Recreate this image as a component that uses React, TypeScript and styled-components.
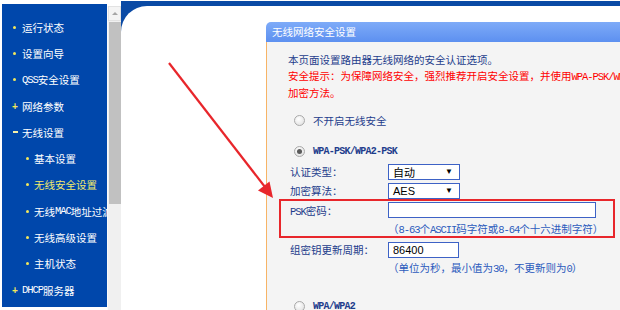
import React from "react";
import styled, { createGlobalStyle } from "styled-components";

const colors = {
    sidebar: "#0047ab",
    frame: "#0a4aa5",
    yellow: "#f3e85a",
    navy: "#1e3d8c",
    hint: "#2c5bbd",
    red: "#ff0000",
    mark: "#e8262b",
    orange: "#f7b466",
    field: "#3d62c6",
};

const GlobalStyle = createGlobalStyle`
    html, body {
        margin: 0;
        padding: 0;
        background: #fff;
        overflow: hidden;
    }
    body {
        font-family: "Noto Sans CJK SC", "Liberation Sans", sans-serif;
        font-size: 10.5px;
    }
`;

const menu = [
    { label: "运行状态", level: 0, mark: "dot" },
    { label: "设置向导", level: 0, mark: "dot" },
    { label: ["QSS", "安全设置"], level: 0, mark: "dot" },
    { label: "网络参数", level: 0, mark: "plus" },
    { label: "无线设置", level: 0, mark: "minus" },
    { label: "基本设置", level: 1, mark: "dot" },
    { label: "无线安全设置", level: 1, mark: "dot", active: true },
    { label: ["无线", "MAC", "地址过滤"], level: 1, mark: "dot" },
    { label: "无线高级设置", level: 1, mark: "dot" },
    { label: "主机状态", level: 1, mark: "dot" },
    { label: ["", "DHCP", "服务器"], level: 0, mark: "plus" },
];

const renderLabel = (label: string | string[]) => {
    if (typeof label === "string") return label;
    if (label.length === 2) return <><Half>{label[0]}</Half>{label[1]}</>;
    return <>{label[0]}<Half>{label[1]}</Half>{label[2]}</>;
};

const App: React.FC = () => (
    <>
        <GlobalStyle />
        <Page>
            <Sidebar>
                {menu.map((item, i) => (
                    <MenuItem key={i} $level={item.level} $active={item.active}>
                        <Marker $level={item.level}>
                            {item.mark === "dot" && <Dot />}
                            {item.mark === "plus" && <Sign>+</Sign>}
                            {item.mark === "minus" && <Minus />}
                        </Marker>
                        {renderLabel(item.label)}
                    </MenuItem>
                ))}
            </Sidebar>

            <Scrollbar>
                <ScrollButton>
                    <UpArrow />
                </ScrollButton>
                <ScrollThumb />
            </Scrollbar>

            <Main>
                <Content>
                    <Panel>
                        <PanelHeader>无线网络安全设置</PanelHeader>
                        <PanelBody>
                            <Intro>本页面设置路由器无线网络的安全认证选项。</Intro>
                            <Warning>
                                安全提示：为保障网络安全，强烈推荐开启安全设置，并使用
                                <Half>WPA-PSK/WPA2-PSK</Half> AES
                                <br />
                                加密方法。
                            </Warning>

                            <RadioRow $gap={9}>
                                <Radio />
                                <span>不开启无线安全</span>
                            </RadioRow>

                            <RadioRow $gap={11}>
                                <Radio $checked />
                                <Mono>WPA-PSK/WPA2-PSK</Mono>
                            </RadioRow>

                            <FormRow $gap={1}>
                                <Label>认证类型：</Label>
                                <Select>
                                    <span>自动</span>
                                    <Caret>▼</Caret>
                                </Select>
                            </FormRow>
                            <FormRow>
                                <Label>加密算法：</Label>
                                <Select>
                                    <span>AES</span>
                                    <Caret>▼</Caret>
                                </Select>
                            </FormRow>

                            <Highlight>
                                <FormRow $height={20}>
                                    <Label>
                                        <Half>PSK</Half>密码：
                                    </Label>
                                    <TextField $width={208} readOnly value="" />
                                </FormRow>
                                <Hint $gap={1}>
                                    （<Half>8-63</Half>个<Half>ASCII</Half>码字符或<Half>8-64</Half>个十六进制字符）
                                </Hint>
                            </Highlight>

                            <FormRow $gap={2}>
                                <Label>组密钥更新周期：</Label>
                                <TextField $width={71} readOnly value="86400" />
                            </FormRow>
                            <Hint $gap={1}>
                                （单位为秒，最小值为<Half>30</Half>，不更新则为<Half>0</Half>）
                            </Hint>

                            <RadioRow $gap={19}>
                                <Radio />
                                <Mono>WPA/WPA2</Mono>
                            </RadioRow>
                        </PanelBody>
                    </Panel>
                </Content>
            </Main>

            <Annotation width="620" height="310" viewBox="0 0 620 310">
                <line x1="169" y1="63" x2="265" y2="187" stroke={colors.mark} strokeWidth="2.2" />
                <polygon points="273,198 258,190.5 269.5,181.5" fill={colors.mark} />
            </Annotation>
        </Page>
    </>
);

const Page = styled.div`
    position: relative;
    display: flex;
    width: 620px;
    height: 310px;
    overflow: hidden;
`;

const Sidebar = styled.nav`
    flex: 0 0 105px;
    margin: 4px 0 3px 2px;
    padding-top: 10px;
    box-sizing: border-box;
    background: ${colors.sidebar};
    overflow: hidden;
`;

const MenuItem = styled.div<{ $level: number; $active?: boolean }>`
    display: flex;
    align-items: center;
    height: 26.3px;
    padding-left: ${(p) => (p.$level ? 24 : 11)}px;
    white-space: nowrap;
    color: ${(p) => (p.$active ? "#f2ea6c" : "#fff")};
`;

const Marker = styled.span<{ $level: number }>`
    display: flex;
    align-items: center;
    flex: 0 0 ${(p) => (p.$level ? 8 : 9)}px;
`;

const Dot = styled.span`
    width: 3px;
    height: 3px;
    border-radius: 50%;
    background: ${colors.yellow};
`;

const Sign = styled.span`
    font-family: "Liberation Sans", sans-serif;
    font-size: 10px;
    font-weight: bold;
    color: ${colors.yellow};
    margin-left: -1px;
`;

const Minus = styled.span`
    width: 5px;
    height: 2px;
    background: #f4efa8;
`;

const Half = styled.span`
    font-family: "Liberation Mono", monospace;
    letter-spacing: -1.05px;
`;

const Scrollbar = styled.div`
    flex: 0 0 14px;
    margin-top: 6px;
    display: flex;
    flex-direction: column;
    background: #f0f0f0;
    border-left: 1px solid #fafafa;
    box-sizing: border-box;
`;

const ScrollButton = styled.div`
    height: 15px;
    display: flex;
    align-items: center;
    justify-content: center;
    border: 1px solid #e2e2e2;
    background: #f4f4f4;
    box-sizing: border-box;
`;

const UpArrow = styled.span`
    width: 0;
    height: 0;
    border-left: 3px solid transparent;
    border-right: 3px solid transparent;
    border-bottom: 3px solid #a6a6a6;
`;

const ScrollThumb = styled.div`
    height: 182px;
    margin: 1px 0 0 1px;
    background: #c1c1c1;
`;

const Main = styled.main`
    flex: 1;
    min-width: 0;
    margin-top: 1px;
    display: flex;
    flex-direction: column;
    background: ${colors.frame};
`;

const Content = styled.div`
    flex: 1;
    display: flex;
    flex-direction: column;
    margin-top: 5px;
    padding: 16px 0 0 145px;
    background: #fff;
    border-top-left-radius: 26px;
    overflow: hidden;
`;

const Panel = styled.section`
    flex: 1;
    width: 420px;
    display: flex;
    flex-direction: column;
`;

const PanelHeader = styled.div`
    height: 20px;
    line-height: 20px;
    padding-left: 6px;
    color: #fff;
    background: linear-gradient(#7eabf8, #5d90f0);
    border-top-left-radius: 5px;
`;

const PanelBody = styled.div`
    flex: 1;
    padding: 10px 0 0 21px;
    background: #f4f4f4;
    border-left: 1px solid ${colors.orange};
    color: ${colors.navy};
`;

const Intro = styled.p`
    margin: 0;
    line-height: 16px;
`;

const Warning = styled.p`
    margin: 0;
    line-height: 16px;
    color: ${colors.red};
    white-space: nowrap;
`;

const RadioRow = styled.div<{ $gap: number }>`
    display: flex;
    align-items: center;
    gap: 8px;
    height: 20px;
    margin-top: ${(p) => p.$gap}px;
    padding-left: 6px;
`;

const Radio = styled.span<{ $checked?: boolean }>`
    position: relative;
    width: 11px;
    height: 11px;
    box-sizing: border-box;
    border-radius: 50%;
    border: 1px solid #a9a9a9;
    background: radial-gradient(circle at 40% 35%, #fff, #dcdcdc);

    &::after {
        content: "";
        display: ${(p) => (p.$checked ? "block" : "none")};
        position: absolute;
        left: 2px;
        top: 2px;
        width: 5px;
        height: 5px;
        border-radius: 50%;
        background: #5a5a5a;
    }
`;

const Mono = styled.span`
    font-family: "Liberation Mono", monospace;
    font-weight: bold;
    font-size: 10px;
    letter-spacing: -0.75px;
`;

const FormRow = styled.div<{ $gap?: number; $height?: number }>`
    display: grid;
    grid-template-columns: 98px auto;
    align-items: center;
    height: ${(p) => p.$height ?? 19}px;
    margin-top: ${(p) => p.$gap ?? 0}px;
    padding-left: 2px;
`;

const Label = styled.span`
    white-space: nowrap;
`;

const Select = styled.div`
    display: flex;
    align-items: center;
    justify-content: space-between;
    width: 72px;
    height: 16px;
    box-sizing: border-box;
    padding: 0 6px 0 4px;
    border: 1px solid ${colors.field};
    background: #fff;
    color: #000;
    font-family: "Liberation Sans", "Noto Sans CJK SC", sans-serif;
    font-size: 11px;
`;

const Caret = styled.span`
    font-size: 8px;
`;

const TextField = styled.input<{ $width: number }>`
    width: ${(p) => p.$width}px;
    height: 16px;
    box-sizing: border-box;
    padding: 0 4px;
    border: 1px solid ${colors.field};
    background: #fff;
    color: #000;
    font-family: "Liberation Sans", sans-serif;
    font-size: 11px;
    outline: none;
`;

const Highlight = styled.div`
    position: relative;

    &::before {
        content: "";
        position: absolute;
        left: -9px;
        top: -1px;
        width: 336px;
        height: 39px;
        box-sizing: border-box;
        border: 2px solid ${colors.mark};
        pointer-events: none;
    }
`;

const Hint = styled.div<{ $gap?: number }>`
    margin-top: ${(p) => p.$gap ?? 0}px;
    padding-left: 100px;
    line-height: 16px;
    color: ${colors.hint};
    white-space: nowrap;
`;

const Annotation = styled.svg`
    position: absolute;
    left: 0;
    top: 0;
    pointer-events: none;
`;

export default App;
